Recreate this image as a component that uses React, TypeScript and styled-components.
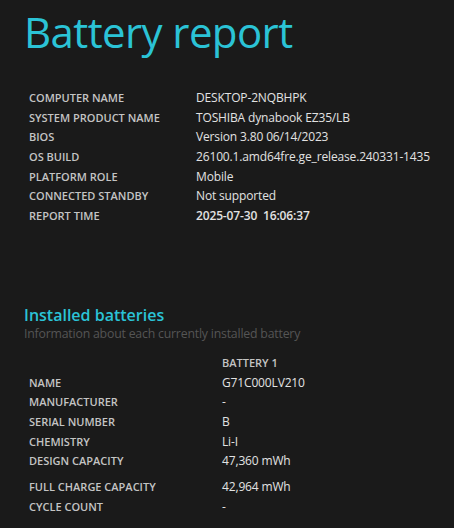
import React from "react";
import styled, { createGlobalStyle } from "styled-components";

const Global = createGlobalStyle`
  html, body { margin: 0; padding: 0; background: #1a1a1a; }
  body { font-family: "Open Sans", "Noto Sans", sans-serif; }
`;

const Page = styled.div`
  width: 454px;
  height: 528px;
  overflow: hidden;
  background: #1a1a1a;
  padding: 0 0 0 24px;
  box-sizing: border-box;
`;

const Title = styled.h1`
  margin: 0;
  padding-top: 4px;
  font-size: 42px;
  line-height: 56px;
  font-weight: 400;
  color: #2bc3d6;
  letter-spacing: -0.6px;
`;

const Table = styled.div<{ $valueCol: number; $top: number }>`
  display: grid;
  grid-template-columns: ${(p) => p.$valueCol}px auto;
  margin-top: ${(p) => p.$top}px;
  padding-left: 5px;
`;

const Label = styled.div<{ $after?: number }>`
  font-size: 11px;
  font-weight: 600;
  color: #c4c4c4;
  height: 19.7px;
  line-height: 19.7px;
  margin-bottom: ${(p) => p.$after ?? 0}px;
  white-space: nowrap;
`;

const Value = styled.div<{ $bold?: boolean; $after?: number }>`
  font-size: 12px;
  font-weight: ${(p) => (p.$bold ? 600 : 400)};
  color: #e2e2e2;
  height: 19.7px;
  line-height: 19.7px;
  margin-bottom: ${(p) => p.$after ?? 0}px;
  white-space: nowrap;
  letter-spacing: -0.15px;
`;

const Section = styled.h2`
  margin: 79px 0 0;
  font-size: 16px;
  font-weight: 600;
  line-height: 21px;
  color: #2bc3d6;
`;

const Sub = styled.div`
  font-size: 12.3px;
  line-height: 16px;
  color: #555555;
  letter-spacing: -0.2px;
`;

const ColHead = styled(Label)``;

const info: [string, string, boolean?][] = [
  ["COMPUTER NAME", "DESKTOP-2NQBHPK"],
  ["SYSTEM PRODUCT NAME", "TOSHIBA dynabook EZ35/LB"],
  ["BIOS", "Version 3.80 06/14/2023"],
  ["OS BUILD", "26100.1.amd64fre.ge_release.240331-1435"],
  ["PLATFORM ROLE", "Mobile"],
  ["CONNECTED STANDBY", "Not supported"],
  ["REPORT TIME", "2025-07-30\u00a0\u00a016:06:37", true],
];

const battery: [string, string, number?][] = [
  ["NAME", "G71C000LV210"],
  ["MANUFACTURER", "-"],
  ["SERIAL NUMBER", "B"],
  ["CHEMISTRY", "Li-I"],
  ["DESIGN CAPACITY", "47,360 mWh", 6],
  ["FULL CHARGE CAPACITY", "42,964 mWh"],
  ["CYCLE COUNT", "-"],
];

export default function App() {
  return (
    <Page>
      <Global />
      <Title>Battery report</Title>
      <Table $valueCol={167} $top={28}>
        {info.map(([l, v, b]) => (
          <React.Fragment key={l}>
            <Label>{l}</Label>
            <Value $bold={b}>{v}</Value>
          </React.Fragment>
        ))}
      </Table>
      <Section>Installed batteries</Section>
      <Sub>Information about each currently installed battery</Sub>
      <Table $valueCol={193} $top={11}>
        <div />
        <ColHead>BATTERY 1</ColHead>
        {battery.map(([l, v, a]) => (
          <React.Fragment key={l}>
            <Label $after={a}>{l}</Label>
            <Value $after={a}>{v}</Value>
          </React.Fragment>
        ))}
      </Table>
    </Page>
  );
}
